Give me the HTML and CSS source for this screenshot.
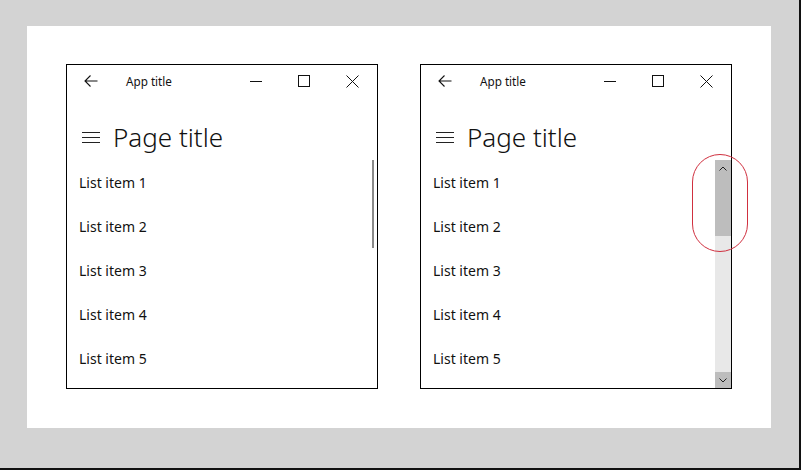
FILE: index.html
```html
<!DOCTYPE html>
<html>
<head>
<meta charset="utf-8">
<link rel="stylesheet" href="styles.css">
</head>
<body>
<div class="page">
  <div class="panel">
    <div class="window">
      <div class="titlebar">
        <div class="back"><svg width="14" height="12" viewBox="0 0 14 12"><path d="M13.5 6H1M6.5 0.5L1 6l5.5 5.5" fill="none" stroke="#111" stroke-width="1.1"/></svg></div>
        <div class="apptitle">App title</div>
        <div class="caps">
          <div class="cap"><svg width="12" height="12" viewBox="0 0 12 12"><path d="M0 6.5h12" stroke="#111" stroke-width="1"/></svg></div>
          <div class="cap"><svg width="12" height="12" viewBox="0 0 12 12"><rect x="0.5" y="0.5" width="11" height="11" fill="none" stroke="#111" stroke-width="1"/></svg></div>
          <div class="cap"><svg width="13" height="13" viewBox="0 0 13 13"><path d="M0.5 0.5l12 12M12.5 0.5l-12 12" stroke="#111" stroke-width="1"/></svg></div>
        </div>
      </div>
      <div class="header">
        <div class="hamb"><svg width="18" height="11" viewBox="0 0 18 11"><path d="M0 0.5h18M0 5.5h18M0 10.5h18" stroke="#222" stroke-width="1"/></svg></div>
        <div class="pagetitle">Page title</div>
      </div>
      <div class="body">
        <ul class="list">
          <li>List item 1</li>
          <li>List item 2</li>
          <li>List item 3</li>
          <li>List item 4</li>
          <li>List item 5</li>
        </ul>
        <div class="thin"><div class="thin-thumb"></div></div>
      </div>
    </div>
    <div class="window">
      <div class="titlebar">
        <div class="back"><svg width="14" height="12" viewBox="0 0 14 12"><path d="M13.5 6H1M6.5 0.5L1 6l5.5 5.5" fill="none" stroke="#111" stroke-width="1.1"/></svg></div>
        <div class="apptitle">App title</div>
        <div class="caps">
          <div class="cap"><svg width="12" height="12" viewBox="0 0 12 12"><path d="M0 6.5h12" stroke="#111" stroke-width="1"/></svg></div>
          <div class="cap"><svg width="12" height="12" viewBox="0 0 12 12"><rect x="0.5" y="0.5" width="11" height="11" fill="none" stroke="#111" stroke-width="1"/></svg></div>
          <div class="cap"><svg width="13" height="13" viewBox="0 0 13 13"><path d="M0.5 0.5l12 12M12.5 0.5l-12 12" stroke="#111" stroke-width="1"/></svg></div>
        </div>
      </div>
      <div class="header">
        <div class="hamb"><svg width="18" height="11" viewBox="0 0 18 11"><path d="M0 0.5h18M0 5.5h18M0 10.5h18" stroke="#222" stroke-width="1"/></svg></div>
        <div class="pagetitle">Page title</div>
      </div>
      <div class="body">
        <ul class="list">
          <li>List item 1</li>
          <li>List item 2</li>
          <li>List item 3</li>
          <li>List item 4</li>
          <li>List item 5</li>
        </ul>
        <div class="sb">
          <div class="sb-up"><svg width="8" height="5" viewBox="0 0 8 5"><path d="M0.5 4.5L4 1l3.5 3.5" fill="none" stroke="#222" stroke-width="1"/></svg></div>
          <div class="sb-thumb"></div>
          <div class="sb-track"></div>
          <div class="sb-down"><svg width="8" height="5" viewBox="0 0 8 5"><path d="M0.5 0.5L4 4l3.5-3.5" fill="none" stroke="#222" stroke-width="1"/></svg></div>
        </div>
        <div class="oval"></div>
      </div>
    </div>
  </div>
</div>
</body>
</html>
```
FILE: styles.css
```css
html, body {
  margin: 0;
  padding: 0;
}
body {
  background: #111;
  width: 801px;
  height: 470px;
  overflow: hidden;
  font-family: "Noto Sans", "Open Sans", sans-serif;
  color: #111;
}
.page {
  width: 799px;
  height: 468px;
  background: #d3d3d3;
  padding: 26px 0 0 27px;
  box-sizing: border-box;
}
.panel {
  width: 744px;
  height: 402px;
  background: #fff;
  box-sizing: border-box;
  padding: 38px 0 0 39px;
  display: flex;
  gap: 42px;
}
.window {
  width: 312px;
  height: 325px;
  border: 1px solid #000;
  box-sizing: border-box;
  display: flex;
  flex-direction: column;
}
.titlebar {
  height: 32px;
  display: flex;
  align-items: center;
  flex-shrink: 0;
}
.back {
  width: 48px;
  height: 32px;
  display: flex;
  align-items: center;
  justify-content: center;
}
.apptitle {
  margin-left: 11px;
  font-size: 11.7px;
  flex: 1;
}
.caps {
  display: flex;
  margin-right: 1px;
}
.cap {
  width: 48px;
  height: 32px;
  display: flex;
  align-items: center;
  justify-content: center;
}
.header {
  height: 63px;
  display: flex;
  align-items: center;
  flex-shrink: 0;
  padding-top: 17px;
  box-sizing: border-box;
}
.hamb {
  width: 18px;
  margin-left: 15px;
  margin-right: 13px;
  display: flex;
  align-items: center;
  padding-top: 1px;
}
.pagetitle {
  font-size: 26px;
  font-weight: 300;
  line-height: 1;
  color: #111;
}
.body {
  flex: 1;
  position: relative;
  display: flex;
}
.list {
  list-style: none;
  margin: 0;
  padding: 0;
  flex: 1;
}
.list li {
  height: 44px;
  display: flex;
  align-items: center;
  padding-left: 12px;
  font-size: 14px;
  color: #111;
}
.thin {
  width: 5px;
  display: flex;
  justify-content: flex-start;
}
.thin-thumb {
  width: 2px;
  height: 88px;
  background: #8a8a8a;
}
.sb {
  width: 16px;
  display: flex;
  flex-direction: column;
  background: #e8e8e8;
}
.sb-up, .sb-down {
  height: 16px;
  display: flex;
  align-items: center;
  justify-content: center;
  background: #bdbdbd;
}
.sb-thumb {
  height: 60px;
  background: #bdbdbd;
}
.sb-track {
  flex: 1;
}
.oval {
  position: absolute;
  left: 271px;
  top: -6px;
  width: 56px;
  height: 98px;
  box-sizing: border-box;
  border: 1.2px solid #d0303f;
  border-radius: 28px;
}
```
